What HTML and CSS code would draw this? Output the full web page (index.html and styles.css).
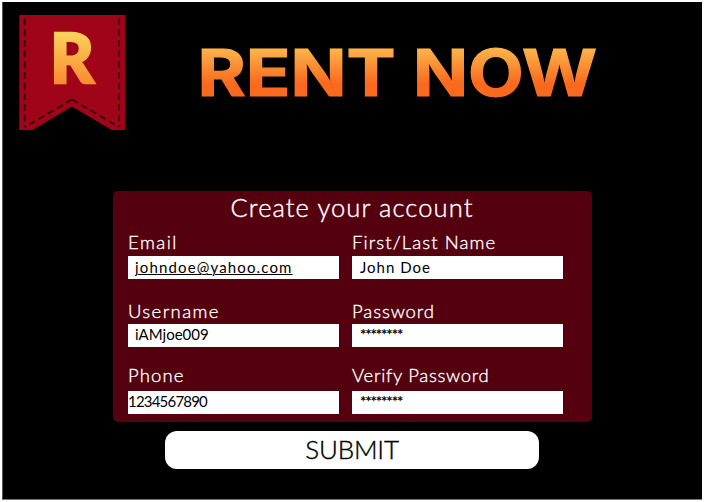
FILE: index.html
```
<!DOCTYPE html>
<html lang="en">
<head>
<meta charset="utf-8">
<title>Rent Now</title>
<link rel="stylesheet" href="styles.css">
</head>
<body>
<main class="page">
  <header class="header">
    <svg class="ribbon" width="108" height="116" viewBox="0 0 108 116" role="img" aria-label="R">
      <defs>
        <linearGradient id="gold" gradientUnits="userSpaceOnUse" x1="0" y1="18" x2="0" y2="69">
          <stop offset="0" stop-color="#fdd05c"/><stop offset="1" stop-color="#f98b30"/>
        </linearGradient>
      </defs>
      <path d="M.3 0H106V115H92.5L53 91.5 13.500 115H.3Z" fill="#a00419"/>
      <path d="M5.700 3.500V112M100.200 3.500V112" class="stitch"/>
      <path d="M53 84.500 6 112M53 84.500 100 112" class="stitch"/>
      <text class="monogram" x="31" y="68" textLength="44" lengthAdjust="spacingAndGlyphs">R</text>
    </svg>
    <svg class="wordmark" width="410" height="110" viewBox="0 -20 410 110" role="img" aria-label="Rent Now">
      <defs>
        <linearGradient id="fire" gradientUnits="userSpaceOnUse" x1="0" y1="13" x2="0" y2="61">
          <stop offset="0" stop-color="#fbb64c"/><stop offset=".75" stop-color="#fa691d"/><stop offset="1" stop-color="#fa691d"/>
        </linearGradient>
      </defs>
      <text class="brand" x="4.500" y="60.500" textLength="198" lengthAdjust="spacingAndGlyphs">RENT</text>
      <text class="brand" x="220" y="60.500" textLength="184" lengthAdjust="spacingAndGlyphs">NOW</text>
    </svg>
  </header>
  <form class="form">
    <section class="panel">
      <h1 class="title">Create your account</h1>
      <div class="fields">
        <label class="field"><span class="caption email">Email</span><input class="box link" value="johndoe@yahoo.com"></label>
        <label class="field"><span class="caption name">First/Last Name</span><input class="box full-name" value="John Doe"></label>
        <label class="field"><span class="caption username">Username</span><input class="box user" value="iAMjoe009"></label>
        <label class="field"><span class="caption password">Password</span><input class="box secret" value="********"></label>
        <label class="field last"><span class="caption phone">Phone</span><input class="box digits" value="1234567890"></label>
        <label class="field last"><span class="caption verify">Verify Password</span><input class="box secret" value="********"></label>
      </div>
    </section>
    <button class="submit" type="button">SUBMIT</button>
  </form>
</main>
</body>
</html>
```

FILE: styles.css
```
* { box-sizing: border-box; }
body { margin: 0; background: #fff; font-family: Lato, sans-serif; overflow: hidden; }
.page { width: 700px; height: 498px; margin: 2px 0 0 2px; background: #000; border-left: 1px solid #555; border-bottom: 1px solid #777; }
.header { display: flex; height: 189px; padding: 13px 0 0 16px; }
.ribbon { flex: none; }
.wordmark { flex: none; margin: 0 0 0 66px; }
.stitch { fill: none; stroke: #25030a; stroke-width: 1.7; stroke-dasharray: 6.500 4.200; }
.monogram { font: 900 69px Lato, sans-serif; fill: url(#gold); stroke: url(#gold); stroke-width: 2.500; }
.brand { font: 700 64px Inter, sans-serif; fill: url(#fire); stroke: url(#fire); stroke-width: 1.200; }
.form { display: flex; flex-direction: column; align-items: flex-start; }
.panel { width: 479px; height: 231px; margin-left: 110px; padding: 0 0 0 15px; border-radius: 5px; background: #54000e; color: #fff; }
.title { width: 448px; margin: 0; height: 41px; text-align: center; font-size: 25.500px; line-height: 32px; font-weight: 300; letter-spacing: 1.100px; white-space: nowrap; -webkit-text-stroke: .4px #fff; }
.fields { display: grid; grid-template-columns: 211px 211px; grid-template-rows: 68px 67px 55px; column-gap: 13px; }
.field { display: flex; flex-direction: column; }
.caption { height: 24px; line-height: 21px; font-size: 18.500px; font-weight: 300; letter-spacing: .9px; white-space: nowrap; -webkit-text-stroke: .35px #fff; }
.email { letter-spacing: 1.500px; }
.username { letter-spacing: 1.400px; line-height: 22px; }
.password { line-height: 22px; }
.name { letter-spacing: 1.1px; }
.phone, .verify { line-height: 17px; }
.phone { letter-spacing: 1.100px; }
.verify { letter-spacing: .7px; }
.box { width: 211px; height: 23px; margin: 0; padding: 0 0 1px 7px; border: 0; border-radius: 0; background: #fff; color: #000; font: 400 15px Lato, sans-serif; outline: 0; }
.link { text-decoration: underline; text-decoration-thickness: 1px; letter-spacing: 1.150px; }
.full-name { padding-left: 8px; letter-spacing: 1px; }
.user { padding-bottom: 3px; }
.secret { padding: 0 0 3px 8px; letter-spacing: -1.100px; font-weight: 700; }
.digits { padding: 0 0 3px; letter-spacing: -.8px; }
.submit { width: 374px; height: 38px; margin: 9px 0 0 162px; padding: 0 0 2px; border: 0; border-radius: 12px; background: #fff; color: #000; font: 300 26px Lato, sans-serif; letter-spacing: -.2px; -webkit-text-stroke: .4px #000; }
```
